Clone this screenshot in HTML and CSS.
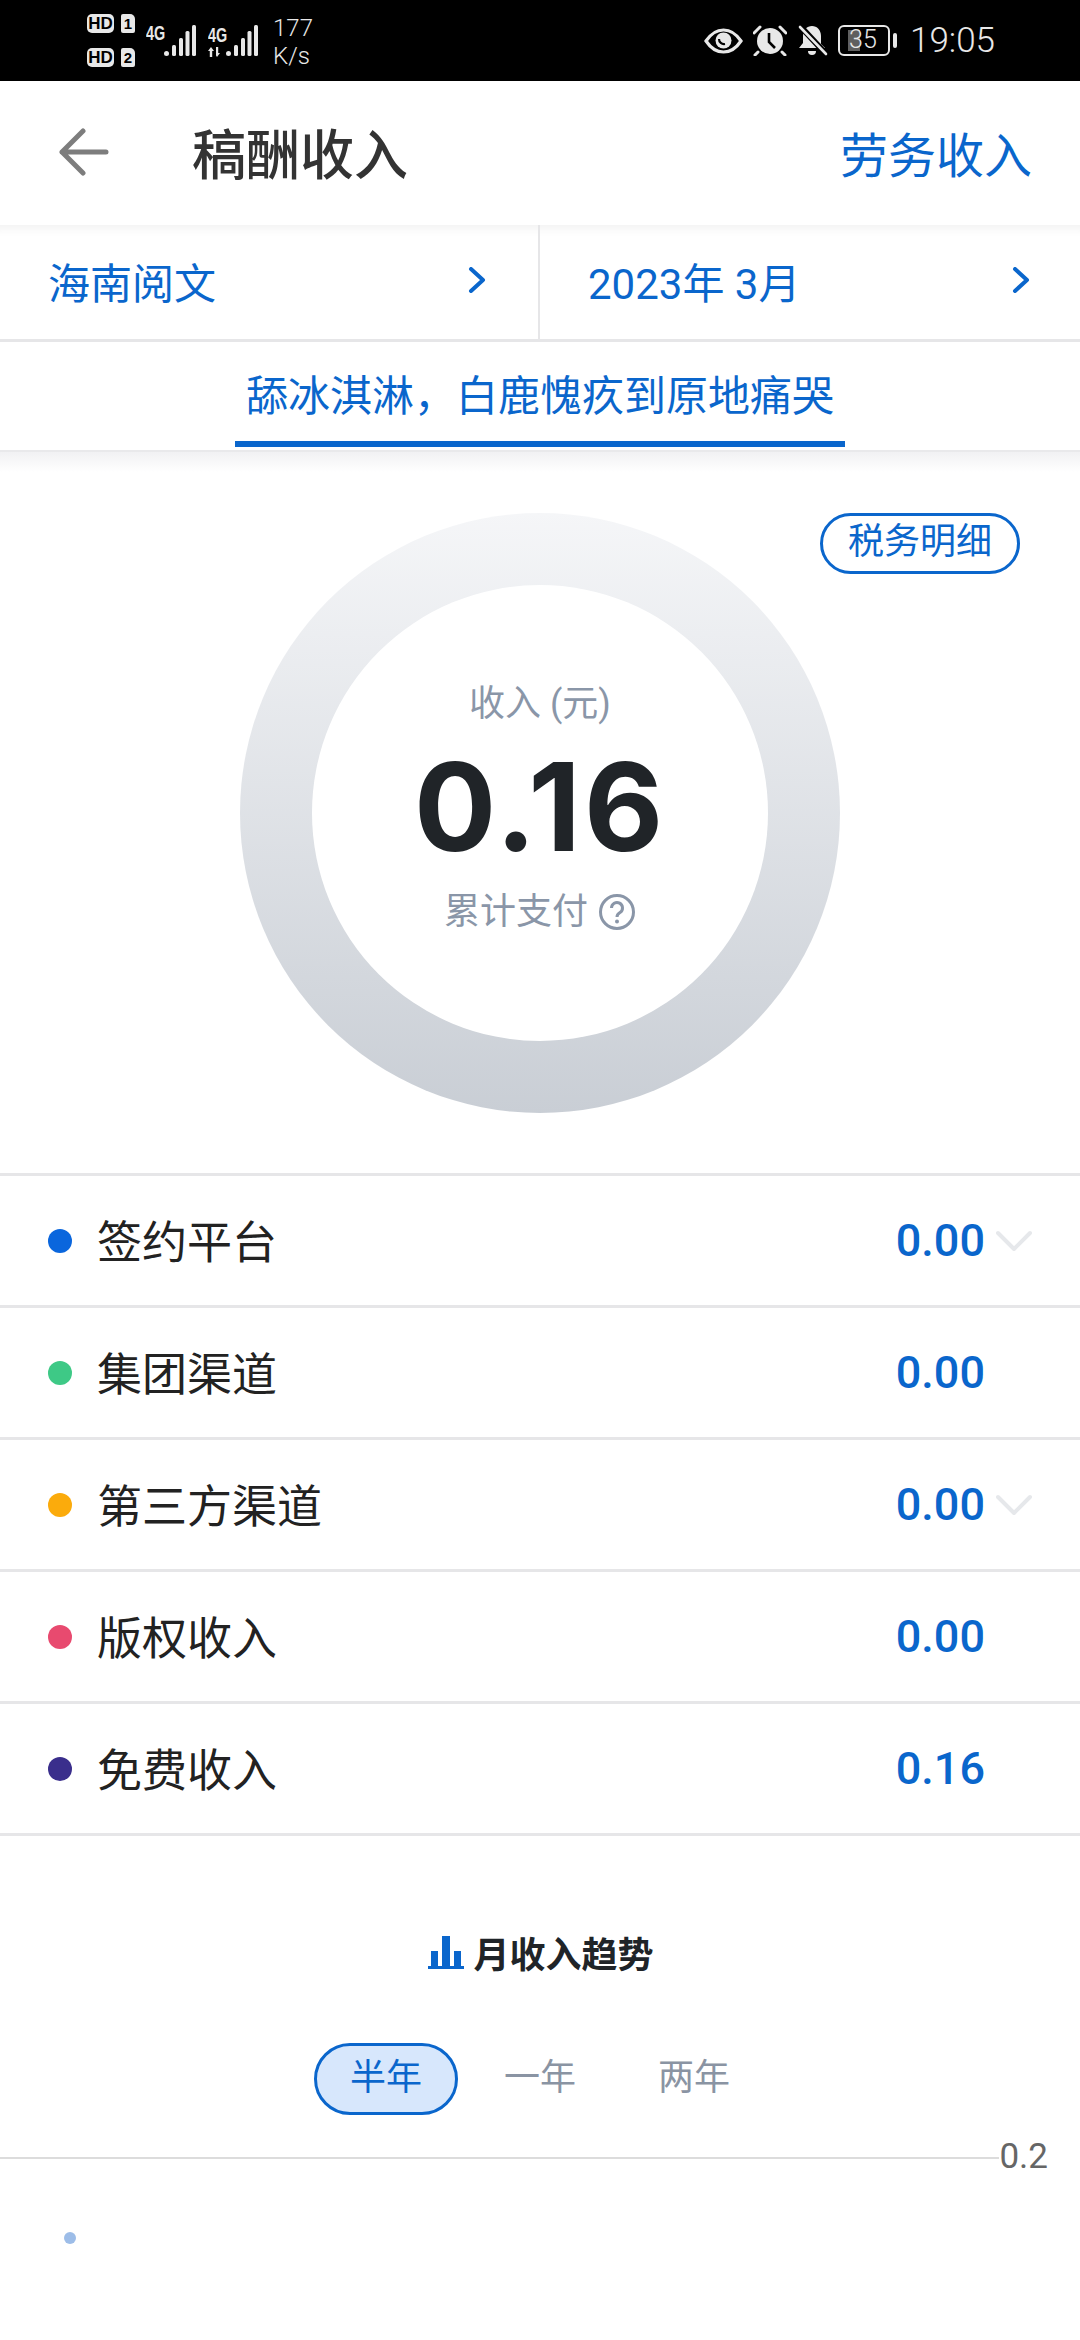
FILE: index.html
```html
<!DOCTYPE html>
<html lang="zh-CN">
<head>
  <meta charset="UTF-8" />
  <title>稿酬收入</title>
  <meta name="viewport" content="width=device-width, initial-scale=1" />
  <link rel="stylesheet" href="styles.css">
</head>
<body>
  <div class="statusbar">
    <div class="sims">
      <div class="sim-line"><span class="hd">HD</span><span class="sim-no">1</span></div>
      <div class="sim-line"><span class="hd">HD</span><span class="sim-no">2</span></div>
    </div>
    <div class="net">
      <span class="net-label">4G</span>
      <svg class="bars" width="32" height="32" viewBox="0 0 32 32" fill="#e8e8e8">
        <circle cx="2.5" cy="28.5" r="2.5"/>
        <rect x="8" y="20" width="4" height="11" rx="1.5"/>
        <rect x="15" y="13" width="4" height="18" rx="1.5"/>
        <rect x="21.5" y="6" width="4" height="25" rx="1.5"/>
        <rect x="28" y="0" width="4" height="31" rx="1.5"/>
      </svg>
    </div>
    <div class="net net-second">
      <div class="net-stack">
        <span class="net-label">4G</span>
        <svg width="18" height="10" viewBox="0 0 18 10" fill="#e8e8e8"><path d="M3 0 6 4H4.2V10H1.8V4H0ZM8 0H10.2V6H12L9 10 8 8.5Z"/></svg>
      </div>
      <svg class="bars" width="32" height="32" viewBox="0 0 32 32" fill="#e8e8e8">
        <circle cx="2.5" cy="28.5" r="2.5"/>
        <rect x="8" y="20" width="4" height="11" rx="1.5"/>
        <rect x="15" y="13" width="4" height="18" rx="1.5"/>
        <rect x="21.5" y="6" width="4" height="25" rx="1.5"/>
        <rect x="28" y="0" width="4" height="31" rx="1.5"/>
      </svg>
    </div>
    <div class="speed"><span>177</span><span>K/s</span></div>

    <div class="status-right">
      <svg width="39" height="26" viewBox="0 0 39 26" fill="none">
        <path d="M2 13C7 5.5 13 2 19.5 2S32 5.5 37 13C32 20.5 26 24 19.5 24S7 20.5 2 13Z" stroke="#e8e8e8" stroke-width="3.2"/>
        <circle cx="19.5" cy="12.5" r="8" fill="#e8e8e8"/>
        <path d="M15 11a5 5 0 0 0 6 5" stroke="#000" stroke-width="2.2"/>
      </svg>
      <svg width="34" height="31" viewBox="0 0 34 31" fill="none">
        <circle cx="17" cy="16" r="13" fill="#e8e8e8"/>
        <path d="M16 8v9l6 6" stroke="#000" stroke-width="2.6"/>
        <path d="M1 8 7 2M33 8 27 2M5 27 2 30M29 27l3 3" stroke="#e8e8e8" stroke-width="3" stroke-linecap="round"/>
      </svg>
      <svg width="31" height="31" viewBox="0 0 31 31" fill="none">
        <path d="M15 1c5 0 9 4 9 10v8l4 4H2l4-5v-7c0-6 4-10 9-10Z" fill="#e8e8e8"/>
        <path d="M11 26h8a4 4 0 0 1-8 0Z" fill="#e8e8e8"/>
        <path d="M3 1 30 30" stroke="#000" stroke-width="6"/>
        <path d="M3 2 29 29" stroke="#e8e8e8" stroke-width="2.6" stroke-linecap="round"/>
      </svg>
      <div class="battery">
        <div class="battery-body"><span class="battery-fill"></span><span class="battery-text">35</span></div>
        <span class="battery-nub"></span>
      </div>
      <span class="clock">19:05</span>
    </div>
  </div>

  <header class="topbar">
    <svg class="back" width="50" height="48" viewBox="0 0 50 48" fill="none" stroke="#7d7d7d" stroke-width="5" stroke-linecap="round" stroke-linejoin="round">
      <path d="M47 24H3M24 3 3 24l21 21"/>
    </svg>
    <h1 class="page-title">稿酬收入</h1>
    <a class="top-link">劳务收入</a>
  </header>

  <div class="selectors">
    <div class="selector selector-left">
      <span>海南阅文</span>
      <svg width="18" height="26" viewBox="0 0 18 26" fill="none" stroke="#0a66cc" stroke-width="4" stroke-linecap="round" stroke-linejoin="round"><path d="M3 2 15 13 3 24"/></svg>
    </div>
    <div class="selector selector-right">
      <span>2023年 3月</span>
      <svg width="18" height="26" viewBox="0 0 18 26" fill="none" stroke="#0a66cc" stroke-width="4" stroke-linecap="round" stroke-linejoin="round"><path d="M3 2 15 13 3 24"/></svg>
    </div>
  </div>

  <div class="booktab">
    <span class="booktab-item">舔冰淇淋，白鹿愧疚到原地痛哭</span>
  </div>

  <section class="summary">
    <a class="tax-badge">税务明细</a>
    <div class="ring">
      <div class="ring-inner">
        <div class="ring-label">收入 (元)</div>
        <div class="ring-value">0.16</div>
        <div class="ring-label ring-foot">
          <span>累计支付</span>
          <svg width="38" height="38" viewBox="0 0 38 38" fill="none">
            <circle cx="19" cy="19" r="16.5" stroke="#8a96a8" stroke-width="3"/>
            <path d="M13.5 15a5.5 5.5 0 1 1 8.5 4.6c-2 1.3-3 2.2-3 4.4" stroke="#8a96a8" stroke-width="3"/>
            <circle cx="19" cy="28.5" r="2" fill="#8a96a8"/>
          </svg>
        </div>
      </div>
    </div>
  </section>

  <ul class="income-list">
    <li class="income-row">
      <span class="dot dot-blue"></span><span class="income-name">签约平台</span>
      <span class="income-value">0.00</span>
      <svg class="chev" width="36" height="22" viewBox="0 0 36 22" fill="none" stroke="#e6e8eb" stroke-width="4" stroke-linecap="round" stroke-linejoin="round"><path d="M2 3 18 19 34 3"/></svg>
    </li>
    <li class="income-row">
      <span class="dot dot-green"></span><span class="income-name">集团渠道</span>
      <span class="income-value">0.00</span>
      <span class="chev"></span>
    </li>
    <li class="income-row">
      <span class="dot dot-orange"></span><span class="income-name">第三方渠道</span>
      <span class="income-value">0.00</span>
      <svg class="chev" width="36" height="22" viewBox="0 0 36 22" fill="none" stroke="#e6e8eb" stroke-width="4" stroke-linecap="round" stroke-linejoin="round"><path d="M2 3 18 19 34 3"/></svg>
    </li>
    <li class="income-row">
      <span class="dot dot-red"></span><span class="income-name">版权收入</span>
      <span class="income-value">0.00</span>
      <span class="chev"></span>
    </li>
    <li class="income-row">
      <span class="dot dot-purple"></span><span class="income-name">免费收入</span>
      <span class="income-value">0.16</span>
      <span class="chev"></span>
    </li>
  </ul>

  <section class="trend">
    <h2 class="trend-title">
      <svg width="36" height="33" viewBox="0 0 36 33" fill="#0a66cc">
        <rect x="3" y="15" width="7" height="15"/>
        <rect x="14" y="0" width="8" height="30"/>
        <rect x="26" y="15" width="7" height="15"/>
        <rect x="0" y="30" width="36" height="3"/>
      </svg>
      月收入趋势
    </h2>
    <div class="ranges">
      <span class="range range-on">半年</span>
      <span class="range">一年</span>
      <span class="range">两年</span>
    </div>
    <div class="chart">
      <div class="chart-grid"><span class="grid-line"></span><span class="grid-label">0.2</span></div>
      <span class="chart-point"></span>
    </div>
  </section>
</body>
</html>
```

FILE: styles.css
```css
* {
  box-sizing: border-box;
}

html,
body {
  margin: 0;
  padding: 0;
  background: #ffffff;
}

body {
  width: 1080px;
  height: 2340px;
  overflow: hidden;
  font-family: "Roboto", "Noto Sans CJK SC", sans-serif;
  color: #202428;
}

/* status bar */
.statusbar {
  display: flex;
  align-items: center;
  height: 81px;
  padding-left: 87px;
  background: #000000;
  color: #e8e8e8;
}

.sims {
  display: flex;
  flex-direction: column;
  gap: 15px;
}

.sim-line {
  display: flex;
  align-items: center;
  gap: 7px;
}

.hd {
  width: 27px;
  height: 19px;
  border-radius: 5px;
  background: #e8e8e8;
  color: #000000;
  font-family: "Liberation Sans", sans-serif;
  font-size: 17px;
  font-weight: 700;
  line-height: 19px;
  text-align: center;
}

.sim-no {
  width: 14px;
  height: 19px;
  border-radius: 2px 5px 2px 2px;
  background: #e8e8e8;
  color: #000000;
  font-family: "Liberation Sans", sans-serif;
  font-size: 15px;
  font-weight: 700;
  line-height: 19px;
  text-align: center;
}

.net {
  display: flex;
  align-items: flex-end;
  margin-left: 11px;
  height: 32px;
}

.net-second {
  margin-left: 12px;
}

.net-stack {
  display: flex;
  flex-direction: column;
  gap: 3px;
  width: 18px;
}

.net-label {
  align-self: flex-start;
  width: 18px;
  color: #e8e8e8;
  font-family: "Liberation Sans", sans-serif;
  font-size: 20px;
  font-weight: 700;
  line-height: 17px;
  transform: scaleX(0.72);
  transform-origin: left center;
}

.speed {
  display: flex;
  flex-direction: column;
  gap: 7px;
  margin: 3px 0 0 15px;
  font-size: 24px;
  font-weight: 300;
  line-height: 21px;
}

.status-right {
  display: flex;
  align-items: center;
  gap: 10px;
  margin-left: auto;
  padding-right: 85px;
}

.battery {
  display: flex;
  align-items: center;
  gap: 3px;
}

.battery-body {
  position: relative;
  width: 52px;
  height: 31px;
  padding: 3px 0 3px 8px;
  border: 2.5px solid #e8e8e8;
  border-radius: 6px;
}

.battery-fill {
  display: block;
  width: 12px;
  height: 100%;
  background: #5f5f5f;
}

.battery-text {
  position: absolute;
  top: 0;
  left: -1px;
  width: 100%;
  font-size: 25px;
  font-weight: 300;
  line-height: 26px;
  text-align: center;
}

.battery-nub {
  width: 4px;
  height: 15px;
  border-radius: 2px;
  background: #e8e8e8;
}

.clock {
  margin-left: 3px;
  font-size: 35px;
  font-weight: 300;
}

/* title */
.topbar {
  display: flex;
  align-items: center;
  height: 144px;
  padding: 0 48px 3px 59px;
}

.back {
  margin-right: 83px;
}

.page-title {
  margin: 0;
  color: #333333;
  font-size: 54px;
  font-weight: 500;
}

.top-link {
  margin-left: auto;
  color: #0a66cc;
  font-size: 48px;
}

/* platform + month */
.selectors {
  display: flex;
  height: 117px;
  border-bottom: 3px solid #e6e6e8;
  box-shadow: inset 0 14px 12px -12px rgba(0, 0, 0, 0.07);
}

.selector {
  display: flex;
  flex: 0 0 540px;
  align-items: center;
  justify-content: space-between;
  padding-bottom: 4px;
  color: #0a66cc;
  font-size: 42px;
}

.selector-left {
  padding-left: 48px;
  padding-right: 52px;
  border-right: 2px solid #e6e6e8;
}

.selector-right {
  padding-left: 48px;
  padding-right: 50px;
}

.booktab {
  display: flex;
  justify-content: center;
  height: 110px;
  border-bottom: 2px solid #e9e9eb;
}

.booktab-item {
  width: 610px;
  height: 105px;
  padding-top: 24px;
  border-bottom: 6px solid #0a66cc;
  color: #0a66cc;
  font-size: 42px;
  line-height: 62px;
  text-align: center;
}

/* total ring */
.summary {
  position: relative;
  display: flex;
  justify-content: center;
  height: 721px;
  padding-top: 61px;
  background: linear-gradient(#f1f1f3, #ffffff 20px);
}

.tax-badge {
  position: absolute;
  top: 61px;
  right: 60px;
  width: 200px;
  height: 61px;
  border: 3px solid #0a66cc;
  border-radius: 31px;
  color: #0a66cc;
  font-size: 36px;
  line-height: 52px;
  text-align: center;
}

.ring {
  display: flex;
  align-items: center;
  justify-content: center;
  width: 600px;
  height: 600px;
  border-radius: 50%;
  background: linear-gradient(#f5f6f8, #c9ced5);
}

.ring-inner {
  display: flex;
  flex-direction: column;
  align-items: center;
  width: 456px;
  height: 456px;
  padding-top: 94px;
  border-radius: 50%;
  background: #ffffff;
}

.ring-label {
  display: flex;
  align-items: center;
  gap: 10px;
  height: 50px;
  color: #8a96a8;
  font-size: 36px;
  line-height: 50px;
}

.ring-value {
  height: 128px;
  margin-top: 14px;
  color: #202428;
  font-family: "Inter", sans-serif;
  font-size: 122px;
  font-weight: 700;
  line-height: 128px;
  letter-spacing: 3px;
}

.ring-foot {
  margin-top: 16px;
}

/* income rows */
.income-list {
  margin: 0;
  padding: 0;
  list-style: none;
  border-top: 3px solid #e6e6e8;
}

.income-row {
  display: flex;
  align-items: center;
  height: 132px;
  padding: 0 48px;
  border-bottom: 3px solid #e6e6e8;
}

.dot {
  width: 24px;
  height: 24px;
  margin-right: 25px;
  border-radius: 50%;
}

.dot-blue { background: #0a66dd; }
.dot-green { background: #3ec986; }
.dot-orange { background: #fbab0c; }
.dot-red { background: #e84a6f; }
.dot-purple { background: #3a2e8c; }

.income-name {
  padding-bottom: 3px;
  color: #222222;
  font-size: 45px;
}

.income-value {
  margin-left: auto;
  color: #0a66cc;
  font-size: 45px;
  font-weight: 500;
}

.chev {
  width: 36px;
  margin-left: 11px;
}

/* trend */
.trend-title {
  display: flex;
  align-items: center;
  justify-content: center;
  gap: 9px;
  height: 52px;
  margin: 90px 0 0;
  padding-left: 2px;
  color: #202428;
  font-size: 36px;
  font-weight: 700;
}

.ranges {
  display: flex;
  justify-content: center;
  gap: 10px;
  margin-top: 65px;
}

.range {
  width: 144px;
  height: 72px;
  border: 3px solid transparent;
  border-radius: 36px;
  color: #8a94a3;
  font-size: 36px;
  line-height: 64px;
  text-align: center;
}

.range-on {
  border-color: #0a66cc;
  background: #d7e7fc;
  color: #0a66cc;
}

.chart {
  position: relative;
  margin-top: 23px;
}

.chart-grid {
  display: flex;
  align-items: center;
  height: 40px;
  padding-right: 32px;
}

.grid-line {
  flex: 1;
  height: 2px;
  background: #dcdcdc;
}

.grid-label {
  padding-bottom: 3px;
  color: #666666;
  font-size: 35px;
  font-weight: 400;
  line-height: 40px;
}

.chart-point {
  position: absolute;
  top: 94px;
  left: 64px;
  width: 12px;
  height: 12px;
  border-radius: 50%;
  background: #9dbde8;
}
```
